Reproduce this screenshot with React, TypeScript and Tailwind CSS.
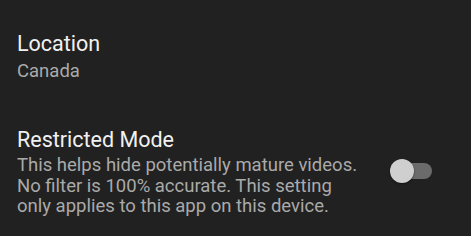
import React from "react";

export default function App() {
  return (
    <div
      className="w-[471px] h-[236px] bg-[#212121] overflow-hidden text-white"
      style={{ fontFamily: "Roboto, 'Noto Sans', sans-serif" }}
    >
      <div className="pl-[17px] pt-[31px]">
        <div className="text-[21.5px] leading-[26px] text-[#f1f1f1]">Location</div>
        <div className="text-[18.5px] leading-[22px] text-[#aaaaaa] mt-[3px]">Canada</div>
      </div>
      <div className="flex items-center pl-[17px] pr-[39px] mt-[45px]">
        <div className="flex-1">
          <div className="text-[21.5px] leading-[26px] text-[#f1f1f1]">Restricted Mode</div>
          <div className="text-[18.5px] leading-[20.5px] text-[#aaaaaa] mt-[2px] w-[350px]">
            This helps hide potentially mature videos. No filter is 100% accurate. This setting only
            applies to this app on this device.
          </div>
        </div>
        <div className="relative w-[42px] h-[24px] flex items-center mt-[-2px]">
          <div className="absolute left-[2px] right-[0px] h-[16px] rounded-full bg-[#6b6b6b]" />
          <div className="absolute left-[0px] w-[24px] h-[24px] rounded-full bg-[#cfcfcf] shadow-[0_1px_2px_rgba(0,0,0,0.5)]" />
        </div>
      </div>
    </div>
  );
}
